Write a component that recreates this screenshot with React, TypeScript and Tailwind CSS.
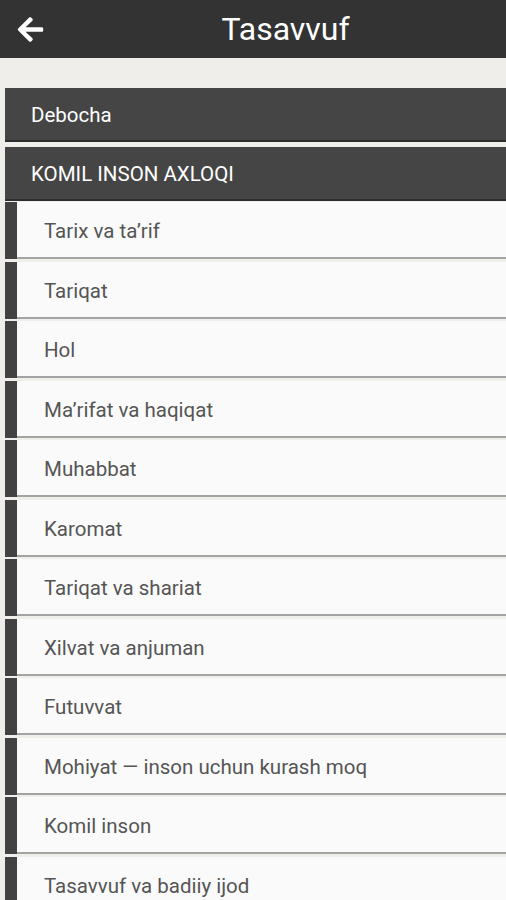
import { FaArrowLeft } from "react-icons/fa";

const sections = ["Debocha", "KOMIL INSON AXLOQI"];

const items = [
  "Tarix va ta’rif",
  "Tariqat",
  "Hol",
  "Ma’rifat va haqiqat",
  "Muhabbat",
  "Karomat",
  "Tariqat va shariat",
  "Xilvat va anjuman",
  "Futuvvat",
  "Mohiyat — inson uchun kurash moq",
  "Komil inson",
  "Tasavvuf va badiiy ijod",
];

export default function App() {
  return (
    <div className="h-[900px] w-[506px] overflow-hidden bg-[#efeeea] font-['Roboto',sans-serif]">
      <header className="flex h-[58px] items-center bg-[#333333] text-white">
        <button className="flex w-[60px] items-center justify-center">
          <FaArrowLeft className="h-[29px] w-[29px]" />
        </button>
        <h1 className="flex-1 pl-[5px] text-center text-[32px] leading-none">Tasavvuf</h1>
      </header>

      <div className="pl-[5px] pt-[30px]">
        {sections.map((s) => (
          <div
            key={s}
            className="mb-[5px] flex h-[54px] items-center border-b-2 border-[#2e2e2e] bg-[#454545] pl-[26px] pt-[3px] text-[20.5px] text-white"
          >
            {s}
          </div>
        ))}
        <ul className="-mt-[4px]">
          {items.map((t) => (
            <li key={t} className="mb-[2.5px] flex h-[57px]">
              <span className="w-[12px] bg-[#424242]" />
              <span className="flex flex-1 items-center border-b-2 border-[#a3a3a3] bg-[#fafafa] pl-[27px] pt-[4px] text-[20.5px] text-[#555555]">
                {t}
              </span>
            </li>
          ))}
        </ul>
      </div>
    </div>
  );
}
